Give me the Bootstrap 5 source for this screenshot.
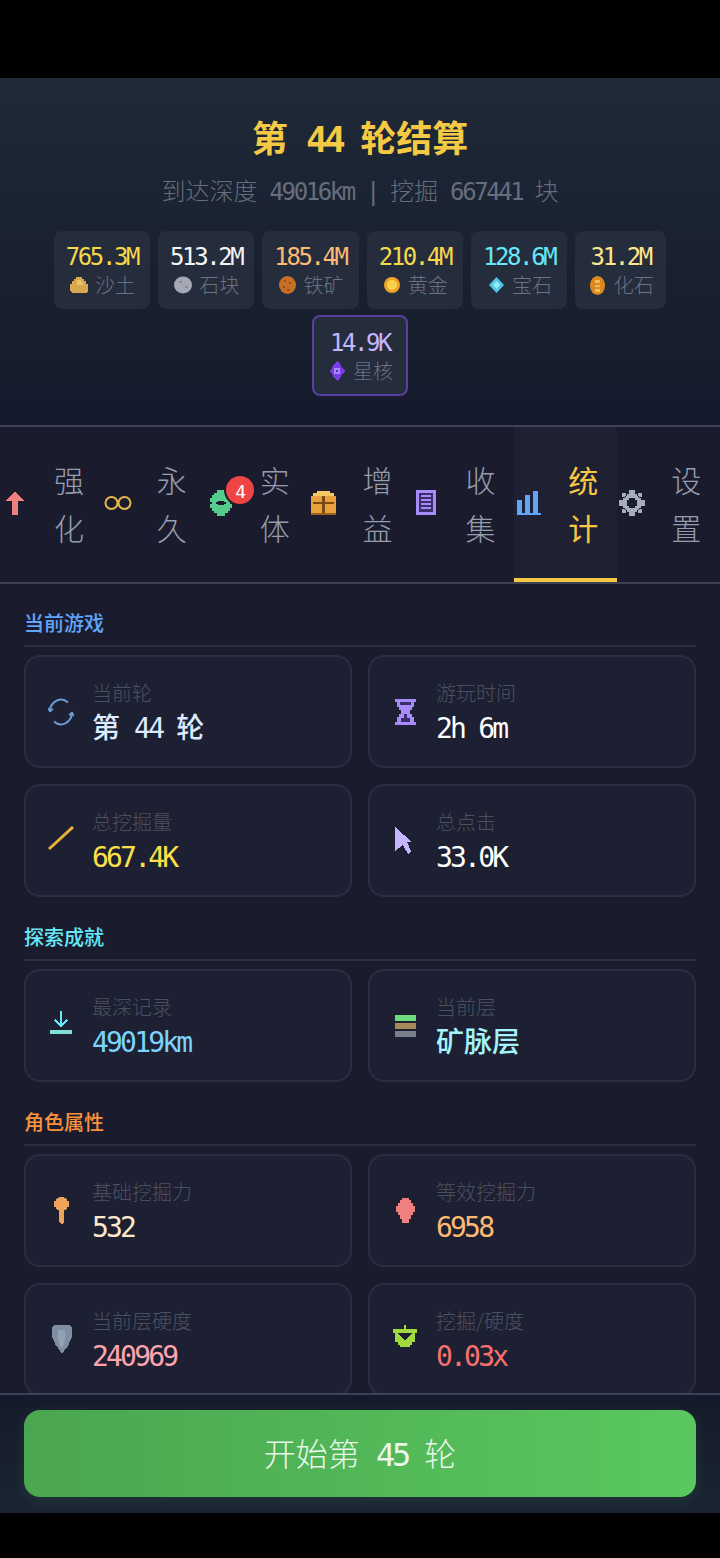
<!DOCTYPE html>
<html lang="zh">
<head>
  <meta charset="UTF-8" />
  <meta name="viewport" content="width=device-width, initial-scale=1.0" />
  <title>第 44 轮结算</title>
  <link href="https://cdn.jsdelivr.net/npm/bootstrap@5.3.0/dist/css/bootstrap.min.css" rel="stylesheet" />
  <style>
    html, body { height: 100%; }
    body {
      background: #000;
      padding-top: 78px;
      font-family: "Noto Sans CJK SC", "DejaVu Sans Mono", monospace;
      overflow: hidden;
    }
    svg { display: block; shape-rendering: crispEdges; }
    .lat { font-family: "DejaVu Sans Mono", monospace; letter-spacing: -0.1em; }

    .game-shell { height: 1435px; background: #1a1c2e; }

    .result-head {
      height: 349px;
      padding-top: 35px;
      background: linear-gradient(180deg, #1f2937, #141a2b);
      border-bottom: 2px solid #3d4257;
    }
    .result-title { font-size: 36px; line-height: 46px; font-weight: 700; color: #f6c945; margin: 0 0 9px; }
    .result-sub { font-size: 24px; line-height: 36px; color: #666d7c; font-weight: 300; margin-bottom: 21px; }
    .res-wrap { gap: 6px 8px; padding: 0 40px; }
    .res-chip { background: #252c3c; border-radius: 8px; padding: 8px 12px 10px; min-width: 91px; }
    .res-chip.star-chip { border: 2px solid #5b3fa0; padding: 8px 12px 9px; min-width: 96px; }
    .res-num { font-size: 24px; line-height: 32px; height: 32px; }
    .res-name { font-size: 20px; line-height: 28px; height: 28px; color: #6b7280; font-weight: 300; gap: 6px; }
    .res-pic { width: 20px; flex: none; }

    .tab-bar { height: 157px; background: #1a1c2e; border-bottom: 2px solid #3d4257; }
    .tab-item { width: 103px; padding: 0 0 4px 1px; color: #969dab; font-weight: 300; }
    .tab-item.on { background: #1f2133; color: #f6c945; font-weight: 400; box-shadow: inset 0 -4px 0 #f6c945; }
    .tab-ico { width: 28px; flex: none; }
    .tab-txt { width: 32px; margin-left: 25px; font-size: 30px; line-height: 48px; }
    .tab-count {
      top: -14px; right: -22px; width: 28px; height: 28px;
      background: #ef4444; color: #fff; font-size: 18px; line-height: 28px; font-weight: 500;
      box-shadow: 0 0 0 2px #1a1c2e;
    }

    .stat-scroll { padding: 0 24px; overflow: hidden; flex: 1 1 0; min-height: 0; margin-top: -1px; }
    .group-title {
      font-size: 20px; line-height: 30px; font-weight: 500;
      padding-bottom: 7px; margin: 25px 0 8px;
      border-bottom: 2px solid #2a2e40;
    }
    .stat-card { height: 113px; background: #1d2032; border: 2px solid #2a2e40; border-radius: 16px; padding-left: 22px; gap: 18px; }
    .stat-ico { width: 26px; flex: none; }
    .stat-label { font-size: 20px; line-height: 30px; color: #4b5060; font-weight: 300; }
    .stat-value { font-size: 28px; line-height: 36px; height: 38px; font-weight: 500; }

    .foot-bar {
      height: 120px; padding: 15px 24px 0;
      background: linear-gradient(180deg, #151a2b, #1a2433);
      border-top: 2px solid #3d4257;
    }
    .go-btn {
      height: 87px; font-size: 32px; color: #e9f7ea; font-weight: 300; border: 0; border-radius: 16px;
      background: linear-gradient(90deg, #4aa650, #5ac85f);
      box-shadow: 0 4px 14px rgba(76, 175, 80, .15);
    }
  </style>
</head>
<body>
  <div class="game-shell d-flex flex-column">

    <div class="result-head text-center">
      <h1 class="result-title">第<span class="lat"> 44 </span>轮结算</h1>
      <div class="result-sub">到达深度<span class="lat"> 49016km | </span>挖掘<span class="lat"> 667441 </span>块</div>
      <div class="res-wrap d-flex flex-wrap justify-content-center" id="resources"></div>
    </div>

    <div class="tab-bar d-flex flex-shrink-0" id="tabs"></div>

    <div class="stat-scroll" id="stats"></div>

    <div class="foot-bar flex-shrink-0">
      <button type="button" class="btn go-btn w-100">开始第<span class="lat"> 45 </span>轮</button>
    </div>
  </div>

  <script src="https://cdn.jsdelivr.net/npm/bootstrap@5.3.0/dist/js/bootstrap.bundle.min.js"></script>
  <script>
    const ico = (w, h, body) => `<svg width="${w}" height="${h}" viewBox="0 0 ${w} ${h}">${body}</svg>`;
    const smooth = (w, h, body) => `<svg width="${w}" height="${h}" viewBox="0 0 ${w} ${h}" fill="none" style="shape-rendering:auto">${body}</svg>`;
    const lat = s => `<span class="lat">${s}</span>`;

    const resources = [
      ["765.3M", "沙土", "#f6d84a", ico(18, 16, `<path d="M6 0h6v2h2v2h2v3h2v7l-2 2H2l-2-2V7h2V4h2V2h2z" fill="#d9a94f"/><path d="M7 3h4v2h2v3H7z" fill="#e9c36f"/>`)],
      ["513.2M", "石块", "#f3f4f6", smooth(18, 18, `<ellipse cx="9" cy="9" rx="9" ry="8.5" fill="#a3a8b4"/><path d="M5 5h3v2H5zM11 10h3v2h-3z" fill="#858a96"/>`)],
      ["185.4M", "铁矿", "#fdba74", smooth(17, 18, `<ellipse cx="8.5" cy="9" rx="8.5" ry="9" fill="#c76f26"/><path d="M5 4h2v2H5zM10 6h2v2h-2zM4 10h2v2H4zM8 13h3v2H8z" fill="#93501a"/>`)],
      ["210.4M", "黄金", "#f6d84a", smooth(16, 16, `<circle cx="8" cy="8" r="8" fill="#f0a325"/><circle cx="8" cy="8" r="5" fill="#fbd34b"/>`)],
      ["128.6M", "宝石", "#67e8f9", smooth(15, 16, `<path d="M7.500 0L15 8l-7.500 8L0 8z" fill="#4fc6e2"/><path d="M7.500 4L11 8l-3.500 4L4 8z" fill="#93ecfa"/>`)],
      ["31.2M", "化石", "#fde68a", smooth(15, 19, `<ellipse cx="7.500" cy="9.500" rx="7.500" ry="9.500" fill="#db8a22"/><path d="M5 4h5v3H5zM5 9h5v2H5zM5 13h5v3H5z" fill="#f3bd55"/>`)],
    ];
    const star = ["14.9K", "星核", "#c4b5fd", ico(16, 20, `<path d="M8 0l3 3 2 4 3 3-3 3-2 4-3 3-3-3-2-4-3-3 3-3 2-4z" fill="#7c3aed"/><path d="M5 7h6v6H5z" fill="#a78bfa"/><path d="M7 9h2v2H7z" fill="#5b21b6"/>`)];

    const chip = (r, extra) => `
      <div class="res-chip ${extra || ""}">
        <div class="res-num text-center" style="color:${r[2]}">${lat(r[0])}</div>
        <div class="res-name d-flex align-items-center justify-content-center"><span class="res-pic d-flex justify-content-center">${r[3]}</span><span>${r[1]}</span></div>
      </div>`;
    document.getElementById("resources").innerHTML = resources.map(r => chip(r)).join("") + chip(star, "star-chip");

    const gearTeeth = "M10 0h6v4h-6zM10 22h6v4h-6zM0 10h4v6H0zM22 10h4v6h-4zM3 3h4v4H3zM19 3h4v4h-4zM3 19h4v4H3zM19 19h4v4h-4z";
    const tabs = [
      ["强化", ico(18, 24, `<path d="M9 0l9 10h-6v14H6V10H0z" fill="#ee8080"/>`)],
      ["永久", smooth(28, 14, `<g stroke="#e8b84a" stroke-width="2"><circle cx="7.500" cy="7" r="6"/><circle cx="20.500" cy="7" r="6"/></g>`)],
      ["实体", `<div class="position-relative">` + ico(22, 26, `<path d="M7 0h8v3h3v2h2v3h2v4h-2v2h2v4h-2v3h-2v2h-3v3H7v-3H4v-2H2v-3H0v-4h2v-2H0V8h2V5h2V3h3z" fill="#55cc8e"/><path d="M8 11h6v1h2v2h-2v1H8v-1H6v-2h2z" fill="#1a1c2e"/>`) + `<span class="tab-count position-absolute rounded-circle text-center">${lat("4")}</span></div>`],
      ["增益", ico(25, 24, `<path d="M6 0h13v2h4v3h2v19H0V5h2V2h4z" fill="#e9a23b"/><path d="M6 0h13v2h4v3H2V2h4z" fill="#f6c860"/><path d="M2 11h21v2H2zM11 5h3v18h-3z" fill="#7a4a14"/><path d="M0 22h25v2H0z" fill="#9a5f1c"/>`)],
      ["收集", ico(20, 25, `<path d="M0 0h20v25H0z" fill="#a78bfa"/><path d="M3 3h14v19H3z" fill="#3b2f6b"/><path d="M5 5h10v2H5zM5 9h10v2H5zM5 13h10v2H5zM5 17h10v2H5z" fill="#a78bfa"/>`)],
      ["统计", ico(24, 24, `<path d="M0 9h5v15H0zM8 4h5v20H8zM16 0h5v24h-5zM0 22h24v2H0z" fill="#60a5fa"/>`)],
      ["设置", ico(26, 26, `<path fill-rule="evenodd" d="${gearTeeth}M8 4h10v2h2v2h2v10h-2v2h-2v2H8v-2H6v-2H4V8h2V6h2zM10 8h6v2h2v6h-2v2h-6v-2H8v-6h2z" fill="#a5adbd"/>`)],
    ];
    document.getElementById("tabs").innerHTML = tabs.map((t, i) => `
      <div class="tab-item d-flex align-items-center ${i === 5 ? "on" : ""}">
        <div class="tab-ico d-flex justify-content-center">${t[1]}</div>
        <div class="tab-txt">${t[0]}</div>
      </div>`).join("");

    const groups = [
      { title: "当前游戏", color: "#60a5fa", items: [
        ["当前轮", "第" + lat(" 44 ") + "轮", "#dbeafe", smooth(26, 30, `<g stroke="#6c9bd8" stroke-width="2"><path d="M2 15A11 12 0 0 1 20 5.500"/><path d="M24 15A11 12 0 0 1 6 24.500"/><path d="M0 11l2 3 3-2M26 19l-2-3-3 2"/></g>`)],
        ["游玩时间", lat("2h 6m"), "#ffffff", ico(21, 26, `<path d="M0 0h21v3h-2v5h-2v3h-2v4h2v3h2v5h2v3H0v-3h2v-5h2v-3h2v-4H4V8H2V3H0z" fill="#a78bfa"/><path d="M5 3h11v3H5zM9 15h3v4h3v4H6v-4h3z" fill="#3b2f6b"/>`)],
        ["总挖掘量", lat("667.4K"), "#fde047", smooth(26, 30, `<path d="M1 23L25 1" stroke="#e8b33a" stroke-width="3"/>`)],
        ["总点击", lat("33.0K"), "#ffffff", ico(21, 27, `<path d="M0 0l17 15h-5l4 9-3 3-5-9-8 6z" fill="#c4b5fd"/>`)],
      ]},
      { title: "探索成就", color: "#67e8f9", items: [
        ["最深记录", lat("49019km"), "#7dd3fc", `<svg width="22" height="32" viewBox="0 0 22 32" fill="none" stroke="#67e8f9" stroke-width="2"><path d="M11 1v14M5 10l6 6 6-6"/><path d="M0 22h22" stroke="#7fe0d8" stroke-width="4"/></svg>`],
        ["当前层", "矿脉层", "#a5f3fc", ico(21, 22, `<path d="M0 0h21v6H0z" fill="#6fdc7c"/><path d="M0 8h21v6H0z" fill="#a8895a"/><path d="M0 16h21v6H0z" fill="#7a7f8c"/>`)],
      ]},
      { title: "角色属性", color: "#fb923c", items: [
        ["基础挖掘力", lat("532"), "#fde9c9", ico(15, 27, `<path d="M5 0h5v1h2v1h1v2h2v6h-2v2h-1v1h-2v12l-2 2-3-2V13H3v-1H2v-2H0V4h2V2h1V1h2z" fill="#f0a35a"/>`)],
        ["等效挖掘力", lat("6958"), "#fdba74", ico(19, 25, `<path d="M6 0h7v2h2v3h2v3h2v6h-2v3h-2v4h-2v4H6v-4H4v-4H2v-3H0V8h2V5h2V2h2z" fill="#ee8080"/>`)],
        ["当前层硬度", lat("240969"), "#fda4af", ico(21, 29, `<path d="M3 0h15l3 3v9l-2 4-2 5-2 2-2 3-2 3-2-3-2-3-2-2-2-5-2-4V3z" fill="#7f8ea3"/><path d="M7 5h7v8l-1 6-2 4h-1l-2-4-1-6z" fill="#93a1b5"/>`)],
        ["挖掘/硬度", lat("0.03x"), "#f87171", ico(24, 30, `<path d="M11 0h2v4h11v4h-2v9h-3v3h-2v2H7v-2H5v-3H2V8H0V4h11z" fill="#a3d940"/><path d="M5 8h14l-7 8z" fill="#1d2032"/>`)],
      ]},
    ];

    document.getElementById("stats").innerHTML = groups.map(g => `
      <div class="group-title" style="color:${g.color}">${g.title}</div>
      <div class="row g-3">
        ${g.items.map(it => `
          <div class="col-6">
            <div class="stat-card d-flex align-items-center">
              <div class="stat-ico d-flex justify-content-center">${it[3]}</div>
              <div>
                <div class="stat-label">${it[0]}</div>
                <div class="stat-value" style="color:${it[2]}">${it[1]}</div>
              </div>
            </div>
          </div>`).join("")}
      </div>`).join("");
  </script>
</body>
</html>
